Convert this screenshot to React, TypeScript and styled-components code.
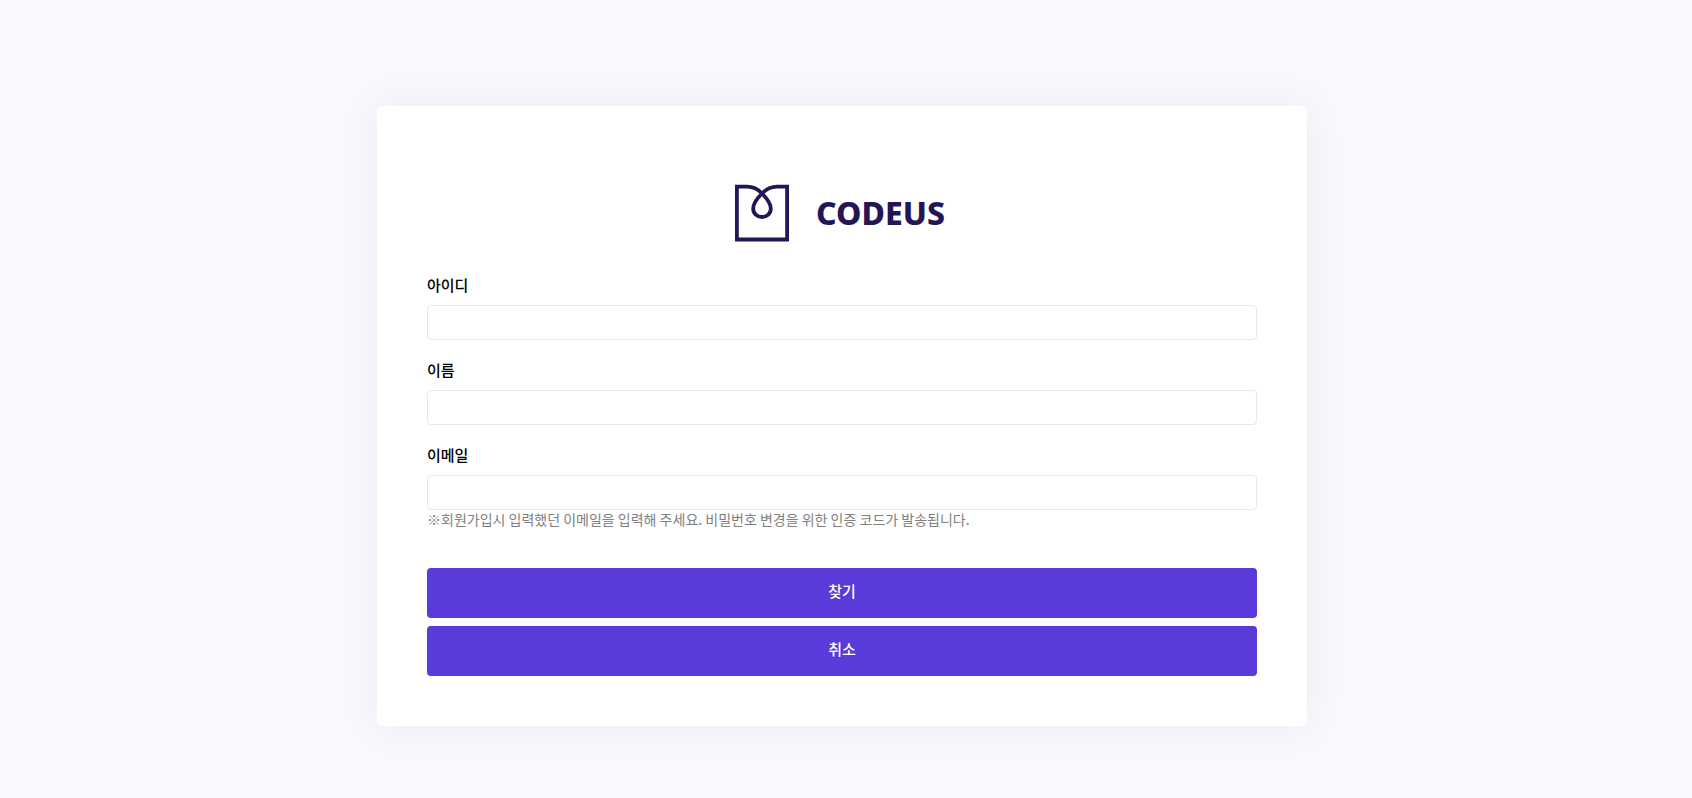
import React from "react";
import styled, { createGlobalStyle } from "styled-components";

const GlobalStyle = createGlobalStyle`
  *, *::before, *::after { box-sizing: border-box; }
  body {
    margin: 0;
    background: #f8f9fe;
    color: #000;
    font-family: "Noto Sans CJK KR", sans-serif;
    font-size: 15px;
  }
`;

const Page = styled.main`
  min-height: 100vh;
  padding: 106px 8px 72px 0;
`;

const Card = styled.form`
  width: 100%;
  max-width: 930px;
  margin: 0 auto;
  padding: 78px 50px 50px;
  background: #fff;
  border-radius: 5px;
  box-shadow: 0 0 40px rgba(0, 0, 0, 0.06);
`;

const Brand = styled.h1`
  display: flex;
  align-items: center;
  justify-content: center;
  gap: 27px;
  height: 58px;
  margin: 0 0 32px;
  padding-right: 4px;
  color: #251554;
  font-family: "Noto Sans", sans-serif;
  font-size: 32px;
  font-weight: 800;
  line-height: 40px;
`;

const Field = styled.div`
  display: flex;
  flex-direction: column;
  margin-bottom: 19px;
`;

const Label = styled.label`
  margin-bottom: 10px;
  font-size: 15px;
  font-weight: 500;
  line-height: 21px;
`;

const Input = styled.input`
  width: 100%;
  height: 35px;
  padding: 0 12px;
  border: 1px solid #e8e8e8;
  border-radius: 4px;
  background: #fff;
  font: inherit;
`;

const Hint = styled.p`
  margin: 0;
  color: #808080;
  font-size: 14px;
  line-height: 19px;
`;

const Actions = styled.div`
  display: flex;
  flex-direction: column;
  gap: 8px;
  margin-top: 39px;
`;

const Button = styled.button`
  height: 50px;
  padding: 0 0 5px;
  border: 0;
  border-radius: 4px;
  background: #5a3ad9;
  color: #fff;
  font: inherit;
  font-weight: 500;
  cursor: pointer;
`;

const Logo = () => (
  <svg width="54" height="58" viewBox="0 0 54 58" fill="none" stroke="#251554" strokeWidth="3.8" aria-hidden="true">
    <path d="M27 9.5C22.5 4.7 18 2.7 12 2.7H1.9V55.5H52.1V2.7H42C36 2.7 31.5 4.7 27 9.5C22.5 14 18.2 19.5 18.2 24.5C18.2 29.5 22 33 27 33C32 33 35.8 29.5 35.8 24.5C35.8 19.5 31.5 14 27 9.5Z" />
  </svg>
);

export default function App() {
  return (
    <>
      <GlobalStyle />
      <Page>
        <Card onSubmit={(event: React.FormEvent) => event.preventDefault()}>
          <Brand>
            <Logo />
            <span>CODEUS</span>
          </Brand>
          <Field>
            <Label htmlFor="user-id">아이디</Label>
            <Input id="user-id" type="text" />
          </Field>
          <Field>
            <Label htmlFor="user-name">이름</Label>
            <Input id="user-name" type="text" />
          </Field>
          <Field>
            <Label htmlFor="user-email">이메일</Label>
            <Input id="user-email" type="email" aria-describedby="email-hint" />
            <Hint id="email-hint">
              ※회원가입시 입력했던 이메일을 입력해 주세요. 비밀번호 변경을 위한 인증 코드가 발송됩니다.
            </Hint>
          </Field>
          <Actions>
            <Button type="submit">찾기</Button>
            <Button type="button">취소</Button>
          </Actions>
        </Card>
      </Page>
    </>
  );
}
